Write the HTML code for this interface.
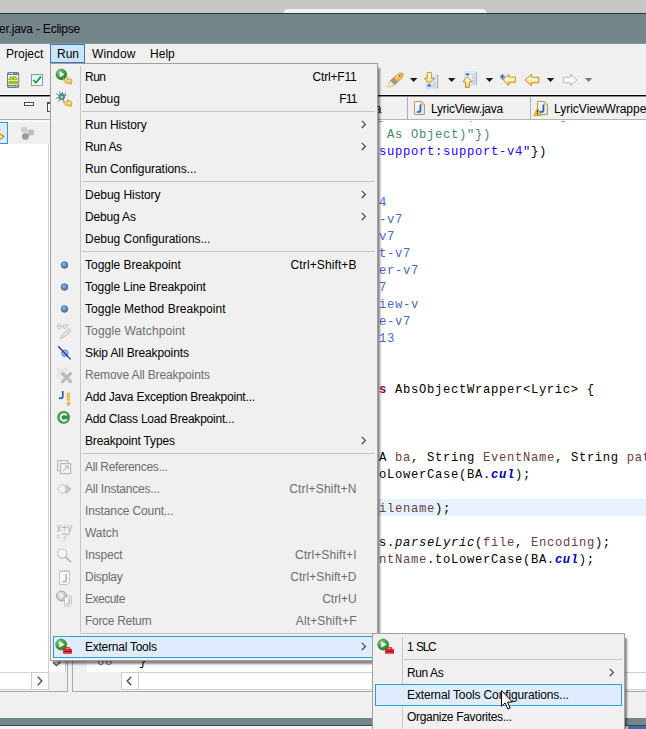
<!DOCTYPE html>
<html>
<head>
<meta charset="utf-8">
<title>Eclipse</title>
<style>
html,body{margin:0;padding:0;}
body{width:646px;height:729px;overflow:hidden;background:#f0f0f0;position:relative;font-family:"Liberation Sans",sans-serif;font-size:12px;color:#000;}
.a{position:absolute;}
.t{position:absolute;white-space:nowrap;line-height:16px;height:16px;}
.code{position:absolute;white-space:pre;font-family:"Liberation Mono",monospace;font-size:12.2px;letter-spacing:0.68px;line-height:17px;height:17px;left:378px;margin-top:2px;}
.code i{font-style:italic;}
.mi{position:absolute;left:34px;white-space:nowrap;line-height:16px;height:16px;}
.sc{position:absolute;right:20px;white-space:nowrap;line-height:16px;height:16px;text-align:right;}
.dis{color:#6d6d6d;}
.sep{position:absolute;left:31px;right:2px;height:1px;background:#c3c3c3;}
.arr{position:absolute;left:310px;width:6px;height:9px;}
svg{position:absolute;overflow:visible;}
</style>
</head>
<body>
<!-- TOP BAND -->
<div class="a" style="left:0;top:0;width:646px;height:13px;background:#c6c6c6;"></div>
<div class="a" style="left:283px;top:9px;width:204px;height:6px;background:#f2f2f2;border-radius:5px 5px 0 0;"></div>
<div class="a" style="left:0;top:13px;width:646px;height:1px;background:#2e3435;"></div>
<div class="a" style="left:0;top:14px;width:646px;height:30px;background:#75868a;"></div>
<div class="a" style="left:0;top:43px;width:646px;height:1px;background:#8297a6;"></div>
<div class="t" id="title" style="left:-1px;top:21px;letter-spacing:-0.218px;">er.java - Eclipse</div>

<!-- MENU BAR -->
<div class="a" style="left:0;top:44px;width:646px;height:22px;background:#f0f0f0;"></div>
<div class="a" style="left:50px;top:44px;width:33px;height:17px;background:#cce4f7;border:1px solid #3f78b2;"></div>
<div class="t" id="mb1" style="left:6px;top:46px;">Project</div>
<div class="t" id="mb2" style="left:57px;top:46px;">Run</div>
<div class="t" id="mb3" style="left:92px;top:46px;letter-spacing:0.152px;">Window</div>
<div class="t" id="mb4" style="left:150px;top:46px;letter-spacing:0.028px;">Help</div>

<!-- TOOLBAR -->
<div class="a" id="toolbar" style="left:0;top:66px;width:646px;height:29px;background:#f0f0f0;"></div>
<div class="a" style="left:0;top:94px;width:50px;height:1px;background:#fafafa;"></div><div class="a" style="left:0;top:95px;width:50px;height:1px;background:#000;"></div><div class="a" style="left:0;top:96px;width:50px;height:1px;background:#8c8c8c;"></div>
<div class="a" style="left:378px;top:94px;width:268px;height:1px;background:#fafafa;"></div><div class="a" style="left:378px;top:95px;width:268px;height:1px;background:#000;"></div><div class="a" style="left:378px;top:96px;width:268px;height:1px;background:#8c8c8c;"></div>

<!-- LEFT PANEL -->
<div class="a" id="leftpanel" style="left:0;top:97px;width:68px;height:595px;">
  <!-- minimize / maximize -->
  <div class="a" style="left:24px;top:5px;width:8px;height:2px;border:1px solid #4d4d4d;background:#fff;"></div>
  <div class="a" style="left:47px;top:5px;width:8px;height:7px;border:1px solid #4d4d4d;border-top-width:2px;background:#fff;"></div>
  <div class="a" style="left:0;top:22px;width:68px;height:1px;background:#a9a9a9;"></div>
  <div class="a" style="left:0;top:23px;width:68px;height:2px;background:#fafafa;"></div>
  <!-- selected tool button -->
  <div class="a" style="left:-4px;top:25px;width:10px;height:20px;background:#dcebfc;border:1px solid #2a9ae0;"></div>
  <svg style="left:-9.2px;top:30px;" width="14" height="15" viewBox="0 0 14 15"><path d="M6 1.8 L9.5 2.8 M6.5 5.4 L13 9.4 L7 14 L1 10 Z" fill="#ffeeb0" stroke="#c98a14" stroke-width="1.2"/></svg>
  <!-- gray spheres -->
  <svg style="left:20px;top:29px;" width="16" height="16" viewBox="0 0 16 16">
    <circle cx="4.2" cy="3.8" r="3.2" fill="#d4d4d4"/><path d="M1.4 3h5.6M1.3 4.6h5.8" stroke="#c0c0c0" stroke-width="0.8"/>
    <circle cx="10.8" cy="6.5" r="3.3" fill="#c4c4c4"/><path d="M7.9 5.6h5.8M7.8 7.4h6" stroke="#aeaeae" stroke-width="0.8"/>
    <circle cx="5.4" cy="10.4" r="3.5" fill="#a6a6a6"/><path d="M2.3 9.5h6.2M2.2 11.3h6.4" stroke="#8e8e8e" stroke-width="0.9"/>
  </svg>
  <!-- tree white area -->
  <div class="a" style="left:0;top:47px;width:48px;height:528px;background:#fff;"></div>
  <!-- vertical scrollbar -->
  <div class="a" style="left:48px;top:47px;width:16px;height:528px;background:#fff;border-left:1px solid #cdcdcd;border-right:1px solid #cdcdcd;"></div>
  <svg style="left:52px;top:563.6px;" width="9" height="6" viewBox="0 0 9 6"><path d="M0.7 0.7 L4.5 4.6 L8.3 0.7" fill="none" stroke="#505050" stroke-width="1.3"/></svg>
  <!-- horizontal scrollbar -->
  <div class="a" style="left:0;top:575px;width:48px;height:16px;background:#fff;border-top:1px solid #d4d4d4;border-bottom:1px solid #d4d4d4;"></div>
  <div class="a" style="left:31px;top:575px;width:16px;height:16px;background:#fff;border:1px solid #cdcdcd;"></div>
  <svg style="left:37px;top:579px;" width="6" height="10" viewBox="0 0 6 10"><path d="M0.8 0.8 L4.8 5 L0.8 9.2" fill="none" stroke="#505050" stroke-width="1.4"/></svg>
  <div class="a" style="left:49px;top:575px;width:18px;height:19px;background:#f0f0f0;"></div>
  <!-- borders -->
  <div class="a" style="left:67px;top:0;width:1px;height:595px;background:#a9a9a9;"></div>
  <div class="a" style="left:0;top:594px;width:68px;height:1px;background:#a9a9a9;"></div>
</div>

<!-- EDITOR -->
<div class="a" id="editor" style="left:72px;top:97px;width:574px;height:595px;">
  <div class="a" style="left:0;top:0;width:1px;height:595px;background:#a9a9a9;"></div>
  <div class="a" style="left:0;top:594px;width:574px;height:1px;background:#a9a9a9;"></div>
  <!-- tab bar -->
  <div class="a" style="left:1px;top:22px;width:573px;height:1px;background:#b4b4b4;"></div>
  <div class="a" style="left:335px;top:0;width:1px;height:22px;background:#b0b0b0;"></div>
  <div class="a" style="left:458px;top:0;width:1px;height:22px;background:#b0b0b0;"></div>
  <!-- text area -->
  <div class="a" style="left:15px;top:23px;width:559px;height:552px;background:#fff;"></div>
  <div class="a" style="left:306px;top:402px;width:268px;height:17px;background:#e8f2fe;"></div>
  <!-- horizontal scrollbar -->
  <div class="a" style="left:49px;top:575px;width:525px;height:16px;background:#fff;border-top:1px solid #cfcfcf;border-bottom:1px solid #cfcfcf;"></div>
  <div class="a" style="left:49px;top:575px;width:16px;height:16px;background:#fff;border:1px solid #cdcdcd;"></div>
  <svg style="left:54px;top:579px;" width="6" height="10" viewBox="0 0 6 10"><path d="M5.2 0.8 L1.2 5 L5.2 9.2" fill="none" stroke="#505050" stroke-width="1.4"/></svg>
  <div class="a" style="left:1px;top:575px;width:48px;height:19px;background:#f0f0f0;"></div>
</div>
<div class="t" id="tab0" style="left:362px;top:101px;">ava</div>
<div class="t" id="tab1" style="left:431px;top:101px;letter-spacing:-0.241px;">LyricView.java</div>
<div class="t" id="tab2" style="left:554px;top:101px;letter-spacing:-0.008px;">LyricViewWrapper.java</div>

<!-- CODE -->
<div class="a" style="left:379px;top:121px;width:4px;height:1px;background:#7fb0a0;"></div>
<div class="a" style="left:470px;top:121px;width:2px;height:1px;background:#9ab8c8;"></div>
<div class="a" style="left:561px;top:121px;width:4px;height:1px;background:#7fb0a0;"></div>
<div class="code" style="top:125px;left:379px;color:#47876a;"> As Object)"})</div>
<div class="code" style="top:142px;left:379px;color:#2a00ff;">support:support-v4"<span style="color:#000">})</span></div>
<div class="code" style="top:193px;left:371px;color:#4a69c4;">v4</div>
<div class="code" style="top:210px;left:379px;color:#4a69c4;">-v7</div>
<div class="code" style="top:227px;left:379px;color:#4a69c4;">v7</div>
<div class="code" style="top:244px;left:379px;color:#4a69c4;">t-v7</div>
<div class="code" style="top:261px;left:379px;color:#4a69c4;">er-v7</div>
<div class="code" style="top:278px;left:371px;color:#4a69c4;">v7</div>
<div class="code" style="top:295px;left:379px;color:#4a69c4;">iew-v</div>
<div class="code" style="top:312px;left:379px;color:#4a69c4;">e-v7</div>
<div class="code" style="top:329px;left:371px;color:#4a69c4;">-13</div>
<div class="code" style="top:380px;left:379px;"><b style="color:#7f0055">s</b> AbsObjectWrapper&lt;Lyric&gt; {</div>
<div class="code" style="top:448px;left:379px;">A <span style="color:#6a3e3e">ba</span>, String <span style="color:#6a3e3e">EventName</span>, String <span style="color:#6a3e3e">path</span></div>
<div class="code" style="top:465px;left:379px;">oLowerCase(BA.<i style="color:#0000c0;font-weight:bold">cul</i>);</div>
<div class="code" style="top:499px;left:379px;"><span style="color:#6a3e3e">ilename</span>);</div>
<div class="code" style="top:533px;left:379px;">s.<i>parseLyric</i>(<span style="color:#6a3e3e">file</span>, <span style="color:#6a3e3e">Encoding</span>);</div>
<div class="code" style="top:550px;left:379px;"><span style="color:#6a3e3e">ntName</span>.toLowerCase(BA.<i style="color:#0000c0;font-weight:bold">cul</i>);</div>
<div class="code" style="top:652px;left:97px;color:#787878;">68</div>
<div class="code" style="top:652px;left:139px;">}</div>

<!-- BOTTOM BAND -->
<div class="a" style="left:0;top:718px;width:646px;height:7px;background:#75868a;"></div>
<div class="a" style="left:0;top:725px;width:646px;height:1px;background:#3c4649;"></div>
<div class="a" style="left:0;top:726px;width:646px;height:3px;background:#f4f4f4;"></div>
<div class="a" style="left:628px;top:726px;width:18px;height:3px;background:#3a6ea8;"></div>

<!-- TOOLBAR + TAB ICONS -->
<svg id="tic" style="left:0;top:0;" width="646" height="729" viewBox="0 0 646 729">
<defs>
  <linearGradient id="tYel" x1="0" y1="0" x2="0" y2="1"><stop offset="0" stop-color="#fffef4"/><stop offset="0.45" stop-color="#fff3c0"/><stop offset="1" stop-color="#ffd25a"/></linearGradient>
  <linearGradient id="tDoc" x1="0" y1="0" x2="1" y2="1"><stop offset="0" stop-color="#ffffff"/><stop offset="1" stop-color="#cfe0f4"/></linearGradient>
  <linearGradient id="tChk" x1="0" y1="0" x2="0" y2="1"><stop offset="0" stop-color="#d8eefc"/><stop offset="1" stop-color="#ffffff"/></linearGradient>
</defs>
<!-- android device -->
<rect x="7" y="72" width="12.2" height="16" rx="1.8" fill="#6d7f95"/>
<rect x="8" y="75" width="10.2" height="10" fill="#fff"/>
<path d="M8.3 80.2 Q8.5 76.3 13.1 76.3 Q17.7 76.3 17.9 80.2 Z" fill="#9bbf1e"/>
<rect x="8.3" y="80.9" width="9.6" height="3.4" fill="#9bbf1e"/>
<path d="M9.6 75.4 L10.8 77 M16.6 75.4 L15.4 77" stroke="#9bbf1e" stroke-width="0.8"/>
<circle cx="11.2" cy="78.5" r="0.6" fill="#fff"/><circle cx="15" cy="78.5" r="0.6" fill="#fff"/>
<path d="M9 73.5 H9.9 M10.8 73.5 H12.9" stroke="#fff" stroke-width="1.1"/><path d="M14.6 73.5 H15.6 M16.4 73.5 H17.4" stroke="#3fe03a" stroke-width="1.1"/>
<path d="M9.2 86.5 H10.3 M11.4 86.5 H12.5 M13.7 86.5 H14.8 M16 86.5 H17.1" stroke="#fff" stroke-width="1.2"/>
<!-- checkbox -->
<rect x="31.5" y="74.5" width="11" height="11" fill="url(#tChk)" stroke="#8c9cb8" stroke-width="1"/>
<path d="M33.4 80 L35.8 82.8 L41 76.6" fill="none" stroke="#1e9a28" stroke-width="1.7"/>
<!-- marker -->
<g transform="translate(387,72)">
  <path d="M0.2 14.4 L3.6 8.6 L7.8 12.8 L1.6 15 Z" fill="#fff1b0" stroke="#e0a626" stroke-width="0.8" stroke-linejoin="round"/>
  <path d="M1 14.2 L5.4 10.8" stroke="#ffffff" stroke-width="1.5"/>
  <path d="M3.6 8.6 L6.4 5.8 L10.6 10 L7.8 12.8 Z" fill="#a39a98" stroke="#857c7a" stroke-width="0.6"/>
  <path d="M6.4 5.8 L12.6 1 L16 1.4 L15.8 4.8 L10.6 10 Z" fill="#f5bd45" stroke="#c4851a" stroke-width="0.8" stroke-linejoin="round"/>
  <path d="M8 5.8 L13 2" stroke="#fff0b8" stroke-width="1"/>
  <circle cx="12.6" cy="3.6" r="0.85" fill="#2a58b8"/>
</g>
<!-- dropdown arrows -->
<path d="M410 78 H417.4 L413.7 82 Z M448 78 H455.4 L451.7 82 Z M485.8 78 H493.2 L489.5 82 Z M546.8 78 H554.2 L550.5 82 Z" fill="#1a1a1a"/>
<path d="M585 78 H592.2 L588.6 82 Z" fill="#7a7a7a"/>
<!-- next annotation (down arrow + doc) -->
<g transform="translate(-1.3,0)">
<rect x="427.6" y="75" width="11.2" height="13" fill="url(#tDoc)" stroke="#b4c4dc" stroke-width="0.6"/>
<path d="M439 75 V88" stroke="#a8a684" stroke-width="0.9"/>
<path d="M434 77.5 H437 M434 79.5 H437 M434 81.5 H437 M434 83.5 H437 M433 85.5 H437" stroke="#a9bcd8" stroke-width="0.8"/>
<rect x="428.8" y="84.6" width="3.4" height="1.9" fill="#2a5db0"/>
<path d="M428.6 72.4 H432.6 V78.2 H435.4 L430.6 83.8 L425.8 78.2 H428.6 Z" fill="url(#tYel)" stroke="#c4871a" stroke-width="0.9" stroke-linejoin="round"/>
</g>
<!-- prev annotation (up arrow + doc) -->
<rect x="465" y="72" width="11.4" height="13" fill="url(#tDoc)" stroke="#b4c4dc" stroke-width="0.6"/>
<path d="M476.4 72 V85" stroke="#9fb0cc" stroke-width="1"/>
<path d="M470 74.5 H475 M472 76.5 H475 M472 78.5 H475 M472 80.5 H475 M472 82.5 H475" stroke="#a9bcd8" stroke-width="0.8"/>
<rect x="465.8" y="73.4" width="3.4" height="1.8" fill="#2a5db0"/>
<path d="M465.6 87.4 H469.4 V81.8 H472 L467.5 76.2 L463 81.8 H465.6 Z" fill="url(#tYel)" stroke="#c4871a" stroke-width="0.9" stroke-linejoin="round"/>
<!-- last edit location -->
<path d="M503 79.6 L508.6 74.4 V77 H515.4 V82.4 H508.6 V85.4 Z" fill="url(#tYel)" stroke="#c4871a" stroke-width="0.9" stroke-linejoin="round"/>
<path d="M502.4 74 V79.6 M499.8 76.8 H505 M500.6 74.8 L504.2 78.8 M504.2 74.8 L500.6 78.8" stroke="#2a58b8" stroke-width="0.8"/>
<!-- back -->
<path d="M525 80 L531.4 74.3 V77.2 H538.8 V82.8 H531.4 V85.7 Z" fill="url(#tYel)" stroke="#c4871a" stroke-width="1" stroke-linejoin="round"/>
<!-- forward (disabled) -->
<path d="M577 80 L570.6 74.3 V77.2 H563.4 V82.8 H570.6 V85.7 Z" fill="#f7f7f7" stroke="#b8b8b8" stroke-width="1" stroke-linejoin="round"/>
<!-- J file icons in tabs -->
<g id="jfile"><path d="M414.5 101.5 H421.4 L424.5 104.6 V114.5 H414.5 Z" fill="url(#tDoc)" stroke="#bd9c52" stroke-width="1"/><path d="M421.3 101.8 V104.8 H424.3" fill="#f3e2b4" stroke="#c4a266" stroke-width="0.7"/>
<path d="M420.4 104.6 V110 Q420.4 112 418.6 112 Q417.6 112 417 111.5" fill="none" stroke="#2d62b0" stroke-width="1.7"/></g>
<use href="#jfile" x="123" y="0"/>
<path d="M537.5 108.2 L541.2 115.4 H533.8 Z" fill="#f9cc5e" stroke="#c99326" stroke-width="0.9" stroke-linejoin="round"/><path d="M537.5 110.2 V112.4 M537.5 113.3 V114.4" stroke="#1a1400" stroke-width="1.1"/>
</svg>

<!-- MAIN MENU -->
<div class="a" id="menu" style="left:50px;top:63px;width:326px;height:596px;background:#f0f0f0;border:1px solid #a0a0a0;box-shadow:3px 4px 2px -1px rgba(0,0,0,0.48);">
  <div class="a" style="left:29px;top:2px;width:1px;height:568px;background:#c6c6c6;"></div>
  <div class="a" style="left:2px;top:572px;width:320px;height:20px;background:#deecfd;border:1px solid #26a0da;"></div>
  <div class="mi" style="top:5px;letter-spacing:-0.539px;">Run</div>
  <div class="mi" style="left:261.6px;top:5px;letter-spacing:-0.184px;">Ctrl+F11</div>
  <div class="mi" style="top:27px;letter-spacing:-0.135px;">Debug</div>
  <div class="mi" style="left:288.2px;top:27px;letter-spacing:-0.799px;">F11</div>
  <div class="sep" style="top:47px;"></div>
  <div class="mi" style="top:53px;letter-spacing:-0.099px;">Run History</div>
  <svg class="arr" style="top:56px;" viewBox="0 0 6 9"><path d="M0.8 0.8 L4.4 4.4 L0.8 8" fill="none" stroke="#3c3c3c" stroke-width="1.15"/></svg>
  <div class="mi" style="top:75px;letter-spacing:-0.317px;">Run As</div>
  <svg class="arr" style="top:78px;" viewBox="0 0 6 9"><path d="M0.8 0.8 L4.4 4.4 L0.8 8" fill="none" stroke="#3c3c3c" stroke-width="1.15"/></svg>
  <div class="mi" style="top:97px;letter-spacing:-0.059px;">Run Configurations...</div>
  <div class="sep" style="top:117px;"></div>
  <div class="mi" style="top:123px;letter-spacing:-0.041px;">Debug History</div>
  <svg class="arr" style="top:126px;" viewBox="0 0 6 9"><path d="M0.8 0.8 L4.4 4.4 L0.8 8" fill="none" stroke="#3c3c3c" stroke-width="1.15"/></svg>
  <div class="mi" style="top:145px;letter-spacing:-0.156px;">Debug As</div>
  <svg class="arr" style="top:148px;" viewBox="0 0 6 9"><path d="M0.8 0.8 L4.4 4.4 L0.8 8" fill="none" stroke="#3c3c3c" stroke-width="1.15"/></svg>
  <div class="mi" style="top:167px;letter-spacing:-0.029px;">Debug Configurations...</div>
  <div class="sep" style="top:187px;"></div>
  <div class="mi" style="top:193px;letter-spacing:-0.022px;">Toggle Breakpoint</div>
  <div class="mi" style="left:239.6px;top:193px;letter-spacing:0.108px;">Ctrl+Shift+B</div>
  <div class="mi" style="top:215px;letter-spacing:-0.059px;">Toggle Line Breakpoint</div>
  <div class="mi" style="top:237px;letter-spacing:0.048px;">Toggle Method Breakpoint</div>
  <div class="mi dis" style="top:259px;letter-spacing:0.119px;">Toggle Watchpoint</div>
  <div class="mi" style="top:281px;letter-spacing:-0.113px;">Skip All Breakpoints</div>
  <div class="mi dis" style="top:303px;letter-spacing:-0.118px;">Remove All Breakpoints</div>
  <div class="mi" style="top:325px;letter-spacing:-0.218px;">Add Java Exception Breakpoint...</div>
  <div class="mi" style="top:347px;letter-spacing:-0.212px;">Add Class Load Breakpoint...</div>
  <div class="mi" style="top:369px;letter-spacing:-0.170px;">Breakpoint Types</div>
  <svg class="arr" style="top:372px;" viewBox="0 0 6 9"><path d="M0.8 0.8 L4.4 4.4 L0.8 8" fill="none" stroke="#3c3c3c" stroke-width="1.15"/></svg>
  <div class="sep" style="top:389px;"></div>
  <div class="mi dis" style="top:395px;letter-spacing:-0.332px;">All References...</div>
  <div class="mi dis" style="top:417px;letter-spacing:-0.215px;">All Instances...</div>
  <div class="mi dis" style="left:238.3px;top:417px;letter-spacing:0.162px;">Ctrl+Shift+N</div>
  <div class="mi dis" style="top:439px;letter-spacing:-0.131px;">Instance Count...</div>
  <div class="mi dis" style="top:461px;letter-spacing:-0.033px;">Watch</div>
  <div class="mi dis" style="top:483px;letter-spacing:-0.172px;">Inspect</div>
  <div class="mi dis" style="left:244.1px;top:483px;letter-spacing:0.122px;">Ctrl+Shift+I</div>
  <div class="mi dis" style="top:505px;letter-spacing:-0.266px;">Display</div>
  <div class="mi dis" style="left:239.2px;top:505px;letter-spacing:0.087px;">Ctrl+Shift+D</div>
  <div class="mi dis" style="top:527px;letter-spacing:-0.508px;">Execute</div>
  <div class="mi dis" style="left:271.2px;top:527px;letter-spacing:0.009px;">Ctrl+U</div>
  <div class="mi dis" style="top:549px;letter-spacing:-0.294px;">Force Return</div>
  <div class="mi dis" style="left:244.8px;top:549px;letter-spacing:0.130px;">Alt+Shift+F</div>
  <div class="sep" style="top:569px;"></div>
  <div class="mi" style="top:575px;letter-spacing:-0.247px;">External Tools</div>
  <svg class="arr" style="top:578px;" viewBox="0 0 6 9"><path d="M0.8 0.8 L4.4 4.4 L0.8 8" fill="none" stroke="#3c3c3c" stroke-width="1.15"/></svg>
</div>

<!-- SUBMENU -->
<div class="a" id="submenu" style="left:372px;top:633px;width:251px;height:110px;background:#f0f0f0;border:1px solid #a0a0a0;box-shadow:3px 4px 2px -1px rgba(0,0,0,0.48);">
  <div class="a" style="left:29px;top:3px;width:1px;height:110px;background:#c6c6c6;"></div>
  <div class="a" style="left:31px;top:25px;width:218px;height:1px;background:#c3c3c3;"></div>
  <div class="a" style="left:2px;top:50px;width:245px;height:20px;background:#deecfd;border:1px solid #26a0da;"></div>
  <div class="t" style="left:34px;top:5px;">1</div><div class="t" style="left:43px;top:5px;letter-spacing:-1.281px;">SLC</div>
  <div class="t" style="left:34px;top:31px;letter-spacing:-0.401px;">Run As</div>
  <div class="t" style="left:34px;top:53px;letter-spacing:-0.127px;">External Tools Configurations...</div>
  <div class="t" style="left:34px;top:75px;letter-spacing:-0.313px;">Organize Favorites...</div>
  <svg class="arr" style="left:236px;top:34px;" viewBox="0 0 6 9"><path d="M0.8 0.8 L4.4 4.4 L0.8 8" fill="none" stroke="#3c3c3c" stroke-width="1.15"/></svg>
</div>

<!-- MENU ICONS (page coords) -->
<svg id="mic" style="left:0;top:0;" width="646" height="729" viewBox="0 0 646 729">
<defs>
  <radialGradient id="gGreen" cx="0.35" cy="0.3" r="0.8"><stop offset="0" stop-color="#8fd08a"/><stop offset="0.6" stop-color="#3a9a3f"/><stop offset="1" stop-color="#1f6f2a"/></radialGradient>
  <linearGradient id="gYel" x1="0" y1="0" x2="0" y2="1"><stop offset="0" stop-color="#fff3b8"/><stop offset="1" stop-color="#f1b935"/></linearGradient>
  <radialGradient id="gBlue" cx="0.35" cy="0.3" r="0.8"><stop offset="0" stop-color="#8fb8dd"/><stop offset="1" stop-color="#3a6ea5"/></radialGradient>
  <radialGradient id="gGray" cx="0.35" cy="0.3" r="0.8"><stop offset="0" stop-color="#e8e8e8"/><stop offset="1" stop-color="#b4b4b4"/></radialGradient>
  <g id="yarrow"><path d="M0.5 2.2 C1.5 4.5 3.5 5.2 5.5 4 L4.4 2.2 L9.3 4.6 L8 9.3 L6.9 7.4 C3.8 9.2 0.8 7 0.5 2.2 Z" fill="url(#gYel)" stroke="#c9952a" stroke-width="0.9" stroke-linejoin="round"/></g>
</defs>
<!-- Run -->
<circle cx="61.4" cy="74.4" r="5.3" fill="url(#gGreen)" stroke="#2c7a33" stroke-width="0.6"/>
<path d="M59.8 71.5 L64.4 74.4 L59.8 77.3 Z" fill="#fff"/>
<use href="#yarrow" x="62.7" y="75.4"/>
<!-- Debug -->
<g stroke="#2f6f7f" stroke-width="0.9" fill="none"><path d="M59.4 91.4 L60.6 94.4 M56.4 93.6 L59.2 95.6 M56.2 98.4 L59 97.4 M58.2 101.6 L60.2 99.4 M62.6 92 L62.4 94 M66.4 95 L64.4 96.2 M65.8 93 L64 94.6"/></g>
<ellipse cx="61.8" cy="96.9" rx="2.7" ry="3" fill="#3a8a9e" stroke="#2a6a82" stroke-width="0.7"/>
<circle cx="61.8" cy="97" r="1.5" fill="#a8dca0"/>
<use href="#yarrow" x="62.7" y="97.6"/>
<!-- breakpoints -->
<circle cx="64.5" cy="265" r="3.3" fill="url(#gBlue)" stroke="#2f5f92" stroke-width="0.8"/>
<circle cx="64.5" cy="287" r="3.3" fill="url(#gBlue)" stroke="#2f5f92" stroke-width="0.8"/>
<circle cx="64.5" cy="309" r="3.3" fill="url(#gBlue)" stroke="#2f5f92" stroke-width="0.8"/>
<!-- Toggle watchpoint (disabled) -->
<g stroke="#bdbdbd" fill="none" stroke-width="1"><circle cx="59.3" cy="327" r="1.8"/><circle cx="65" cy="326.5" r="1.8"/><path d="M61 326.5 q1.2 -1 2.3 0 M57.6 326 q0.5 -2.5 2.8 -2.7 M66.7 326 q1 -2 2.5 -2"/><path d="M60.5 338.5 L62 335 L68.8 328.6 L71 330.8 L64.2 337.2 Z" fill="#e4e4e4"/></g>
<!-- Skip all -->
<circle cx="64.8" cy="353.2" r="3.2" fill="#8fbfe0" stroke="#3f86b8" stroke-width="0.9"/>
<path d="M58.2 346.2 L70.6 359.4" stroke="#1d2f8a" stroke-width="1.3"/>
<!-- Remove all (disabled) -->
<g stroke-linecap="round"><path d="M58.5 369 L66 376.5 M66 369 L58.5 376.5" stroke="#cfcfcf" stroke-width="3"/><path d="M58.5 369 L66 376.5 M66 369 L58.5 376.5" stroke="#f4f4f4" stroke-width="1.6"/><path d="M62.5 373.5 L70.5 381.5 M70.5 373.5 L62.5 381.5" stroke="#bcbcbc" stroke-width="3.2"/></g>
<!-- J! -->
<path d="M62.8 391 V396.2 Q62.8 398.3 60.7 398.3 Q59.6 398.3 59 397.7" fill="none" stroke="#2d5fa8" stroke-width="1.7"/>
<path d="M67 393.4 Q68.4 392 69.8 393.4 L69.2 400.4 Q68.4 401.2 67.6 400.4 Z" fill="#fbd84a" stroke="#d0982a" stroke-width="0.7"/><circle cx="68.4" cy="403.7" r="1.5" fill="#fbd84a" stroke="#c48a18" stroke-width="0.7"/>
<!-- Class load -->
<circle cx="63.6" cy="417.4" r="6.4" fill="#2f9440"/><circle cx="63.6" cy="417.4" r="5.6" fill="none" stroke="#5cb866" stroke-width="0.8"/>
<path d="M66.6 415.6 A3.3 3.3 0 1 0 66.6 419.2" fill="none" stroke="#fff" stroke-width="1.9"/>
<!-- All references (disabled) -->
<g stroke="#b9b9b9" fill="none" stroke-width="1.2"><rect x="57.6" y="460.6" width="10" height="10" fill="#f0f0f0"/><rect x="60.6" y="463.6" width="10" height="10" fill="#f6f6f6"/><path d="M63 471.2 L67.8 466.4 M64.6 466 H68.2 V469.6"/></g>
<!-- All instances (disabled) -->
<g stroke="#bdbdbd" stroke-width="1"><path d="M57.5 489 L62.5 484 L67.5 489 L62.5 494 Z" fill="#f4f4f4"/><path d="M66 484.5 L71 489 L66 493.8 Z" fill="#c8c8c8"/></g>
<!-- Watch (disabled) -->
<g fill="#b4b4b4" font-family="Liberation Sans, sans-serif"><text x="56.6" y="532" font-size="12" textLength="15.6" lengthAdjust="spacingAndGlyphs">x+y</text><text x="61.4" y="541" font-size="10">?</text></g><path d="M57 535.6 H59.6 M57 537.6 H59.6" stroke="#b8b8b8" stroke-width="0.9"/>
<!-- Inspect (disabled) -->
<circle cx="62.3" cy="553.6" r="4.6" fill="#f4f4f4" stroke="#c2c2c2" stroke-width="1.2"/><path d="M65.8 557.2 L70.6 561.6" stroke="#b4b4b4" stroke-width="1.8" stroke-linecap="round"/>
<!-- Display (disabled) -->
<g><path d="M59.5 571.5 H69.5 V582 L67 584.6 H59.5 Z" fill="#f6f6f6" stroke="#c2c2c2" stroke-width="1"/><path d="M60 570.5 H69.5" stroke="#b5b5b5" stroke-width="1" stroke-dasharray="1 1"/><path d="M66.2 574 V579.8 Q66.2 581.8 64.2 581.8 Q63.2 581.8 62.6 581.2" fill="none" stroke="#b0b0b0" stroke-width="1.5"/></g>
<!-- Execute (disabled) -->
<circle cx="61.4" cy="596" r="5" fill="url(#gGray)" stroke="#a8a8a8" stroke-width="1"/><path d="M59.8 593.2 L64.4 596 L59.8 598.8 Z" fill="#f2f2f2"/>
<path d="M64.5 597 H71.5 V604 L69.6 606 H64.5 Z" fill="#f6f6f6" stroke="#c2c2c2" stroke-width="0.9"/><path d="M69.3 598.6 V602.8 Q69.3 604.2 67.8 604.2 Q67 604.2 66.5 603.8" fill="none" stroke="#b0b0b0" stroke-width="1.3"/><path d="M65 595.8 H71.5" stroke="#b5b5b5" stroke-width="0.9" stroke-dasharray="1 1"/>
<!-- External tools icons -->
<g id="ext"><circle cx="61.2" cy="644.6" r="5.5" fill="url(#gGreen)" stroke="#2c7a33" stroke-width="0.6"/><path d="M59.4 641.6 L64.6 644.6 L59.4 647.6 Z" fill="#fff"/>
<rect x="65.3" y="647.2" width="4.6" height="2.2" fill="#e8141c"/><rect x="66.4" y="648" width="2.4" height="0.9" fill="#fbe4e4"/>
<rect x="63.1" y="648.8" width="8.9" height="5" rx="0.8" fill="#e2141c"/><rect x="64.2" y="650.5" width="6.7" height="1.5" fill="#8e0a10"/><path d="M63.8 650.2 H71.4 M64 652.6 H71.2" stroke="#f47a80" stroke-width="0.5"/></g>
<use href="#ext" x="322" y="0"/>
<!-- cursor -->
<path d="M501.5 690.5 V706.3 L505.1 702.9 L507.9 709 L510.2 708 L507.5 702.1 H512.4 Z" fill="#fff" stroke="#000" stroke-width="1" stroke-linejoin="miter"/>
</svg>
</body>
</html>
